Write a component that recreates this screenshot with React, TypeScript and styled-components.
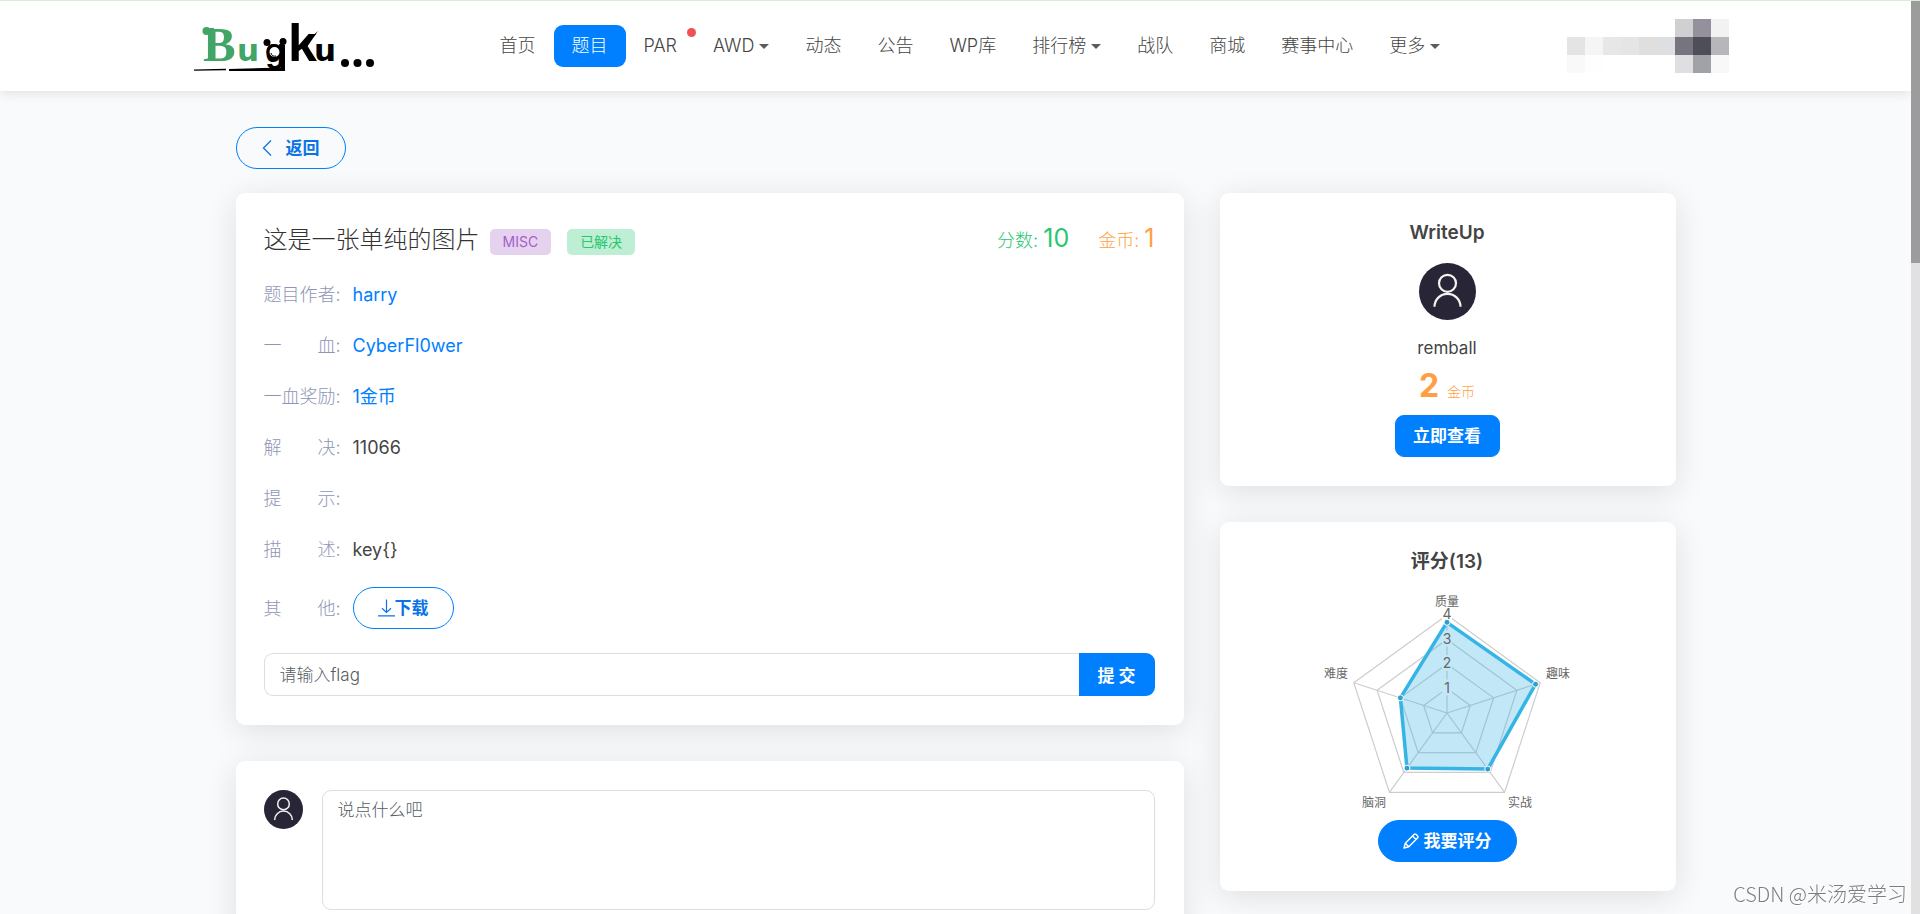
import React from "react";
import styled, { createGlobalStyle } from "styled-components";

const SANS = `Inter, "Noto Sans CJK SC", sans-serif`;

const GlobalStyle = createGlobalStyle`
  *, *::before, *::after { box-sizing: border-box; }
  body { margin: 0; background: #f9fafc; color: #444; font: 400 17px/24px ${SANS}; }
  button, input, textarea { font-family: inherit; margin: 0; }
  h1, h2, p, dl, dd, dt, ul { margin: 0; padding: 0; }
  a { text-decoration: none; }
`;

const Shell = styled.div`
  display: flex;
  height: 100vh;
  overflow: hidden;
  border-top: 1px solid #d9ecd5;
`;

const Page = styled.div`
  flex: 1;
  min-width: 0;
  overflow: hidden;
`;

const ScrollTrack = styled.div`
  width: 9px;
  background: #e1e1e1;
`;

const ScrollThumb = styled.div`
  height: 262px;
  background: #9c9c9c;
`;

const Header = styled.header`
  background: #fff;
  box-shadow: 0 1px 12px rgba(0, 0, 0, 0.12);
`;

const HeaderInner = styled.div`
  display: flex;
  align-items: center;
  max-width: 1546px;
  height: 90px;
  margin: 0 auto;
  padding-left: 3px;
`;

const LogoLink = styled.a`
  display: block;
  height: 62px;
`;

const Nav = styled.nav`
  display: flex;
  margin: 0 auto 0 100px;
`;

const NavLink = styled.a<{ $active?: boolean }>`
  position: relative;
  display: flex;
  align-items: center;
  height: 42px;
  padding: 0 18px;
  border-radius: 9px;
  font-size: 18px;
  font-weight: 300;
  white-space: nowrap;
  color: ${(p) => (p.$active ? "#fff" : "#444")};
  background: ${(p) => (p.$active ? "#0080ff" : "transparent")};
`;

const Caret = styled.span`
  margin-left: 5px;
  border: 5px solid transparent;
  border-top-color: #5c5c5c;
  border-bottom: 0;
`;

const Dot = styled.span`
  position: absolute;
  top: 3px;
  right: -1px;
  width: 9px;
  height: 9px;
  border-radius: 50%;
  background: #ee5253;
`;

const Main = styled.main`
  max-width: 1440px;
  margin: 0 auto;
  padding-top: 36px;
`;

const PillButton = styled.button<{ $solid?: boolean; $width: number }>`
  display: inline-flex;
  align-items: center;
  justify-content: center;
  width: ${(p) => p.$width}px;
  height: 42px;
  padding: 0;
  border: 1px solid #0080ff;
  border-radius: 21px;
  font-size: 17px;
  line-height: 24px;
  font-weight: 700;
  color: ${(p) => (p.$solid ? "#fff" : "#0a74e6")};
  background: ${(p) => (p.$solid ? "#0080ff" : "transparent")};
`;

const SolidButton = styled(PillButton)`
  border-radius: 9px;
`;

const Columns = styled.div`
  display: grid;
  grid-template-columns: minmax(0, 948fr) minmax(0, 456fr);
  gap: 36px;
  margin-top: 24px;
  align-items: start;
`;

const Stack = styled.div`
  display: grid;
  gap: 36px;
`;

const Card = styled.section`
  padding: 29px 29px 29px 28px;
  border-radius: 9px;
  background: #fff;
  box-shadow: 0 6px 32px rgba(0, 0, 0, 0.11);
`;

const CenterCard = styled(Card)`
  display: flex;
  flex-direction: column;
  align-items: center;
`;

const TitleRow = styled.div`
  display: flex;
  align-items: center;
  height: 35px;
`;

const Title = styled.h1`
  font-size: 24px;
  line-height: 34px;
  font-weight: 300;
  color: #333;
`;

const Badge = styled.span<{ $fg: string; $bg: string; $gap: number }>`
  height: 26px;
  margin: 4px 0 0 ${(p) => p.$gap}px;
  padding: 0 13px;
  border-radius: 5px;
  font-size: 14px;
  line-height: 26px;
  font-weight: 400;
  color: ${(p) => p.$fg};
  background: ${(p) => p.$bg};
`;

const Scores = styled.div`
  display: flex;
  gap: 29px;
  margin-left: auto;
  font-size: 18px;
  line-height: 36px;
  font-weight: 300;
`;

const Score = styled.span<{ $color: string }>`
  color: ${(p) => p.$color};
  b { font-size: 25px; font-weight: 400; }
`;

const Facts = styled.dl`
  display: grid;
  gap: 24px;
  margin: 24px 0;
`;

const Fact = styled.div`
  display: flex;
  align-items: center;
  font-size: 18px;
  line-height: 27px;
  dt { width: 89px; font-weight: 300; color: #8f95b5; white-space: pre; }
  dd { font-weight: 400; }
  a { color: #0080ff; }
`;

const FlagForm = styled.form`
  display: flex;
`;

const FlagInput = styled.input`
  flex: 1;
  min-width: 0;
  height: 43px;
  padding: 0 15px;
  border: 1px solid #dedede;
  border-right: 0;
  border-radius: 9px 0 0 9px;
  font-size: 17px;
  font-weight: 300;
  &::placeholder { color: #545c63; }
`;

const SubmitButton = styled.button`
  width: 76px;
  border: 0;
  border-radius: 0 9px 9px 0;
  font-size: 17px;
  font-weight: 700;
  color: #fff;
  background: #0080ff;
`;

const CommentRow = styled.div`
  display: flex;
  gap: 19px;
  align-items: flex-start;
`;

const CommentBox = styled.textarea`
  flex: 1;
  min-width: 0;
  height: 120px;
  padding: 7px 15px;
  border: 1px solid #dedede;
  border-radius: 9px;
  font-size: 17px;
  line-height: 25px;
  font-weight: 300;
  resize: none;
  &::placeholder { color: #545c63; }
`;

const CardTitle = styled.h2`
  font-size: 19px;
  line-height: 22px;
  font-weight: 600;
`;

const AvatarSpace = styled.div`
  display: flex;
  margin: 19px 0 16px;
`;

const Author = styled.p`
  font-size: 17px;
  line-height: 24px;
`;

const Price = styled.p`
  display: flex;
  align-items: baseline;
  height: 36px;
  margin: 8px 0 11px;
  font-size: 14px;
  line-height: 36px;
  font-weight: 300;
  color: #ff9f43;
  b { margin-right: 8px; font-size: 32px; font-weight: 700; }
`;

const ChartSpace = styled.div`
  display: flex;
  margin: 25px 0 8px;
`;

const Watermark = styled.div`
  position: fixed;
  right: 13px;
  bottom: 5px;
  font: 300 20px/30px "Noto Sans CJK SC", sans-serif;
  color: #7c7d80;
  text-shadow: 1px 1px 0 #fff;
`;

function Logo() {
  return (
    <svg width="196" height="62" viewBox="0 0 196 62" role="img" aria-label="Bugku">
      <g fill="#40a567" fontWeight="700">
        <circle cx="20.500" cy="16" r="4" />
        <path d="M20 13h8v4h-8z" />
        <text x="17" y="46" fontFamily="Liberation Serif" fontSize="49">B</text>
        <text x="51" y="46" fontFamily="DejaVu Sans" fontSize="31">u</text>
      </g>
      <g fill="#000" fontWeight="700">
        <circle cx="81" cy="27.500" r="3.500" />
        <circle cx="97" cy="26.500" r="3.500" />
        <text x="79" y="47" fontFamily="Liberation Sans" fontSize="34">g</text>
        <circle cx="88.500" cy="37" r="6.500" fill="#fff" stroke="#000" strokeWidth="3" />
        <path d="M85 38q1 4 5 3" fill="none" stroke="#000" />
        <text x="102" y="46" fontFamily="Liberation Sans" fontSize="52">k</text>
        <path d="M115 31L132 16L121 32Z" />
        <text x="128" y="46" fontFamily="DejaVu Sans" fontSize="31">u</text>
        <path d="M8 54.500l32-.8v1.500l-32 .5zM43 54l52-1.500V30h4v26H43z" />
        <circle cx="159" cy="48" r="4" />
        <circle cx="171.500" cy="48" r="4" />
        <circle cx="184" cy="48" r="4" />
      </g>
    </svg>
  );
}

const MOSAIC: [number, number, string][] = [
  [6, 0, "#d0d0d2"], [7, 0, "#94919c"], [8, 0, "#f2f2f2"],
  [0, 1, "#e4e4e4"], [1, 1, "#f5f5f5"], [2, 1, "#e7e7e7"], [3, 1, "#e5e5e5"], [4, 1, "#e0dfdd"],
  [5, 1, "#dddfe1"], [6, 1, "#777480"], [7, 1, "#4e4e5a"], [8, 1, "#b7b6ba"],
  [0, 2, "#f9f9f9"], [1, 2, "#fefefe"], [6, 2, "#dfdfe1"], [7, 2, "#a1a2a7"], [8, 2, "#f8f8f8"],
];

function HiddenUser() {
  return (
    <svg width="162" height="54" viewBox="0 0 162 54" shapeRendering="crispEdges" aria-hidden="true">
      {MOSAIC.map(([x, y, fill]) => (
        <rect key={`${x}-${y}`} x={x * 18} y={y * 18} width="18" height="18" fill={fill} />
      ))}
    </svg>
  );
}

function Avatar({ size }: { size: number }) {
  return (
    <svg width={size} height={size} viewBox="0 0 57 57" role="img" aria-label="头像">
      <circle cx="28.500" cy="28.500" r="28.500" fill="#272536" />
      <g fill="none" stroke="#f3f3f3" strokeWidth="2.200">
        <circle cx="28.500" cy="20.300" r="8.500" />
        <path d="M15.500 43.800a13 13 0 0 1 26 0" />
      </g>
    </svg>
  );
}

const CX = 150;
const CY = 115;
const STEP = 24.5;

const AXES = [
  { name: "质量", value: 3.7, x: 150, y: 8, anchor: "middle" },
  { name: "趣味", value: 3.8, x: 249, y: 80, anchor: "start" },
  { name: "实战", value: 2.83, x: 211, y: 209, anchor: "start" },
  { name: "脑洞", value: 2.78, x: 89, y: 209, anchor: "end" },
  { name: "难度", value: 2, x: 51, y: 80, anchor: "end" },
] as const;

function point(axis: number, value: number) {
  const angle = (axis * 2 * Math.PI) / 5;
  return [CX + Math.sin(angle) * value * STEP, CY - Math.cos(angle) * value * STEP];
}

const RadarSvg = styled.svg`
  overflow: visible;
`;

function Radar() {
  const ring = (v: number) => AXES.map((_, i) => point(i, v).join(",")).join(" ");
  const shape = AXES.map((a, i) => point(i, a.value).join(",")).join(" ");
  return (
    <RadarSvg width="300" height="214" viewBox="0 0 300 214" role="img" aria-label="评分雷达图">
      <g fill="none" stroke="#cdcdcd" strokeWidth="1.200">
        {[1, 2, 3, 4].map((v) => <polygon key={v} points={ring(v)} />)}
        {AXES.map((a, i) => {
          const [x, y] = point(i, 4);
          return <line key={a.name} x1={CX} y1={CY} x2={x} y2={y} />;
        })}
      </g>
      <g fill="#fff">
        {[1, 2, 3, 4].map((v) => <rect key={v} x={CX - 5} y={CY - v * STEP - 9} width="10" height="16" />)}
      </g>
      <polygon points={shape} fill="#36b4e5" fillOpacity="0.3" stroke="#36b4e5" strokeWidth="3.500" />
      {AXES.map((a, i) => {
        const [x, y] = point(i, a.value);
        return <circle key={a.name} cx={x} cy={y} r="3" fill="#2f9fcb" stroke="#fff" />;
      })}
      <g fill="#666" fontFamily="Inter, Noto Sans CJK SC, sans-serif">
        <g fontSize="14" textAnchor="middle">
          {[1, 2, 3, 4].map((v) => <text key={v} x={CX} y={CY - v * STEP + 4}>{v}</text>)}
        </g>
        <g fontSize="12">
          {AXES.map((a) => <text key={a.name} x={a.x} y={a.y} textAnchor={a.anchor}>{a.name}</text>)}
        </g>
      </g>
    </RadarSvg>
  );
}

function BackIcon() {
  return (
    <svg width="10" height="18" viewBox="0 0 10 18" fill="none" stroke="currentColor" strokeWidth="1.300">
      <path d="M9 1.500L1.500 9L9 16.500" />
    </svg>
  );
}

function DownloadIcon() {
  return (
    <svg width="17" height="18" viewBox="0 0 17 18" fill="none" stroke="currentColor" strokeWidth="1.200">
      <path d="M8.500 0.500V13.500M4 9.200L8.500 13.500L13 9.200M0 16.900H17" />
    </svg>
  );
}

function PencilIcon() {
  return (
    <svg width="16" height="16" viewBox="0 0 16 16" fill="none" stroke="currentColor" strokeWidth="1.400" strokeLinejoin="round">
      <path d="M1 15L2.300 10.200L11 1.500Q12 .5 13 1.300L14.600 3Q15.500 4 14.500 5L5.800 13.700ZM9.500 3L13 6.500M2.300 10.200L5.800 13.700" />
    </svg>
  );
}

const NAV = [
  { text: "首页" },
  { text: "题目", active: true },
  { text: "PAR", dot: true },
  { text: "AWD", menu: true },
  { text: "动态" },
  { text: "公告" },
  { text: "WP库" },
  { text: "排行榜", menu: true },
  { text: "战队" },
  { text: "商城" },
  { text: "赛事中心" },
  { text: "更多", menu: true },
];

const FACTS: { label: string; value: React.ReactNode }[] = [
  { label: "题目作者:", value: <a href="#author">harry</a> },
  { label: "一\u3000\u3000血:", value: <a href="#first">CyberFl0wer</a> },
  { label: "一血奖励:", value: <a href="#reward">1金币</a> },
  { label: "解\u3000\u3000决:", value: "11066" },
  { label: "提\u3000\u3000示:", value: "" },
  { label: "描\u3000\u3000述:", value: "key{}" },
];

const BackLabel = styled.span`
  margin-left: 14px;
`;

const RateLabel = styled.span`
  margin-left: 5px;
`;

const DownloadValue = styled.dd`
  display: flex;
`;

export default function App() {
  return (
    <Shell>
      <GlobalStyle />
      <Page>
        <Header>
          <HeaderInner>
            <LogoLink href="#home"><Logo /></LogoLink>
            <Nav>
              {NAV.map((n) => (
                <NavLink key={n.text} href="#nav" $active={n.active}>
                  {n.text}
                  {n.menu && <Caret />}
                  {n.dot && <Dot />}
                </NavLink>
              ))}
            </Nav>
            <HiddenUser />
          </HeaderInner>
        </Header>
        <Main>
          <PillButton type="button" $width={110}>
            <BackIcon />
            <BackLabel>返回</BackLabel>
          </PillButton>
          <Columns>
            <Stack>
              <Card>
                <TitleRow>
                  <Title>这是一张单纯的图片</Title>
                  <Badge $fg="#a55eca" $bg="#e4d2ef" $gap={10}>MISC</Badge>
                  <Badge $fg="#28c76f" $bg="#beeed3" $gap={16}>已解决</Badge>
                  <Scores>
                    <Score $color="#28c76f">分数: <b>10</b></Score>
                    <Score $color="#ff9f43">金币: <b>1</b></Score>
                  </Scores>
                </TitleRow>
                <Facts>
                  {FACTS.map((f) => (
                    <Fact key={f.label}>
                      <dt>{f.label}</dt>
                      <dd>{f.value}</dd>
                    </Fact>
                  ))}
                  <Fact>
                    <dt>{"其\u3000\u3000他:"}</dt>
                    <DownloadValue>
                      <PillButton type="button" $width={101}>
                        <DownloadIcon />
                        下载
                      </PillButton>
                    </DownloadValue>
                  </Fact>
                </Facts>
                <FlagForm>
                  <FlagInput aria-label="flag" placeholder="请输入flag" />
                  <SubmitButton type="button">提 交</SubmitButton>
                </FlagForm>
              </Card>
              <Card>
                <CommentRow>
                  <Avatar size={39} />
                  <CommentBox aria-label="评论" placeholder="说点什么吧" />
                </CommentRow>
              </Card>
            </Stack>
            <Stack>
              <CenterCard>
                <CardTitle>WriteUp</CardTitle>
                <AvatarSpace><Avatar size={57} /></AvatarSpace>
                <Author>remball</Author>
                <Price><b>2</b>金币</Price>
                <SolidButton type="button" $solid $width={105}>立即查看</SolidButton>
              </CenterCard>
              <CenterCard>
                <CardTitle>评分(13)</CardTitle>
                <ChartSpace><Radar /></ChartSpace>
                <PillButton type="button" $solid $width={139}>
                  <PencilIcon />
                  <RateLabel>我要评分</RateLabel>
                </PillButton>
              </CenterCard>
            </Stack>
          </Columns>
        </Main>
      </Page>
      <ScrollTrack><ScrollThumb /></ScrollTrack>
      <Watermark>CSDN @米汤爱学习</Watermark>
    </Shell>
  );
}
